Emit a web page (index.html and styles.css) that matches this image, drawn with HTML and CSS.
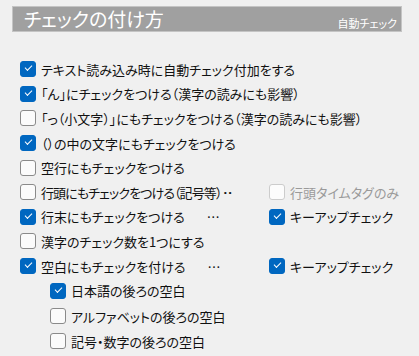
FILE: index.html
```html
<!DOCTYPE html>
<html lang="ja">
<head>
  <meta charset="UTF-8" />
  <title>チェックの付け方</title>
  <link rel="stylesheet" href="styles.css">
</head>
<body>
  <header class="bar">
    <span class="bar-title">チェックの付け方</span>
    <span class="bar-sub">自動チェック</span>
  </header>
  <main class="opts">
    <div class="row"><span class="box on"></span><span class="lbl">テキスト読み込み時に自動チェック付加をする</span></div>
    <div class="row"><span class="box on"></span><span class="lbl">「ん」にチェックをつける（漢字の読みにも影響）</span></div>
    <div class="row"><span class="box"></span><span class="lbl">「っ（小文字）」にもチェックをつける（漢字の読みにも影響）</span></div>
    <div class="row"><span class="box on"></span><span class="lbl">（）の中の文字にもチェックをつける</span></div>
    <div class="row"><span class="box"></span><span class="lbl">空行にもチェックをつける</span></div>
    <div class="row split">
      <div class="left"><span class="box"></span><span class="lbl tight">行頭にもチェックをつける（記号等）</span><span class="dots">··</span></div>
      <div class="right off"><span class="box"></span><span class="lbl">行頭タイムタグのみ</span></div>
    </div>
    <div class="row split">
      <div class="left"><span class="box on"></span><span class="lbl">行末にもチェックをつける</span><span class="more m1">…</span></div>
      <div class="right"><span class="box on"></span><span class="lbl">キーアップチェック</span></div>
    </div>
    <div class="row"><span class="box"></span><span class="lbl">漢字のチェック数を1つにする</span></div>
    <div class="row split">
      <div class="left"><span class="box on"></span><span class="lbl">空白にもチェックを付ける</span><span class="more m2">…</span></div>
      <div class="right"><span class="box on"></span><span class="lbl">キーアップチェック</span></div>
    </div>
    <div class="row sub"><span class="box on"></span><span class="lbl">日本語の後ろの空白</span></div>
    <div class="row sub"><span class="box"></span><span class="lbl">アルファベットの後ろの空白</span></div>
    <div class="row sub"><span class="box"></span><span class="lbl">記号・数字の後ろの空白</span></div>
  </main>
</body>
</html>
```

FILE: styles.css
```css
body {
  margin: 0;
  padding: 6px 17px 0 12px;
  background: #f0f0f0;
  color: #111;
  font-family: "Noto Sans CJK JP", "Noto Sans", sans-serif;
  font-size: 13px;
  font-feature-settings: "palt";
}
.bar {
  height: 26px;
  background: #a0a0a0;
  border: 1px solid #c4c4c4;
  box-sizing: border-box;
  display: flex;
  justify-content: space-between;
  align-items: flex-end;
  padding: 0 4px 0 11px;
  color: #fff;
}
.bar-title {
  font-size: 19px;
  line-height: 26px;
  align-self: center;
}
.bar-sub {
  font-size: 11px;
  line-height: 16px;
}
.opts {
  padding: 25px 0 0 8px;
}
.row {
  height: 24.6px;
  display: flex;
  align-items: center;
  white-space: nowrap;
}
.row.sub {
  padding-left: 30px;
  height: 25.2px;
}
.split .left {
  width: 249px;
  display: flex;
  align-items: center;
}
.split .right {
  display: flex;
  align-items: center;
}
.box {
  width: 16px;
  height: 16px;
  box-sizing: border-box;
  border: 1px solid #8a8a8a;
  border-radius: 3px;
  background: #fbfbfb;
  margin-right: 5px;
  flex: none;
  position: relative;
}
.box.on {
  background: #0067c0;
  border-color: #0067c0;
}
.box.on::after {
  content: "";
  position: absolute;
  left: 4px;
  top: 3px;
  width: 6px;
  height: 3px;
  border-left: 1.2px solid #fff;
  border-bottom: 1.2px solid #fff;
  transform: rotate(-45deg);
}
.off .box {
  border-color: #cccccc;
  background: #fcfcfc;
}
.off .lbl {
  color: #9a9a9a;
}
.tight {
  letter-spacing: -0.9px;
}
.dots {
  font-family: "Noto Sans", sans-serif;
  font-weight: bold;
  margin-left: 2px;
  letter-spacing: 1px;
}
.more {
  letter-spacing: 1px;
}
.m1 { margin-left: 22px; }
.m2 { margin-left: 22px; }
```
